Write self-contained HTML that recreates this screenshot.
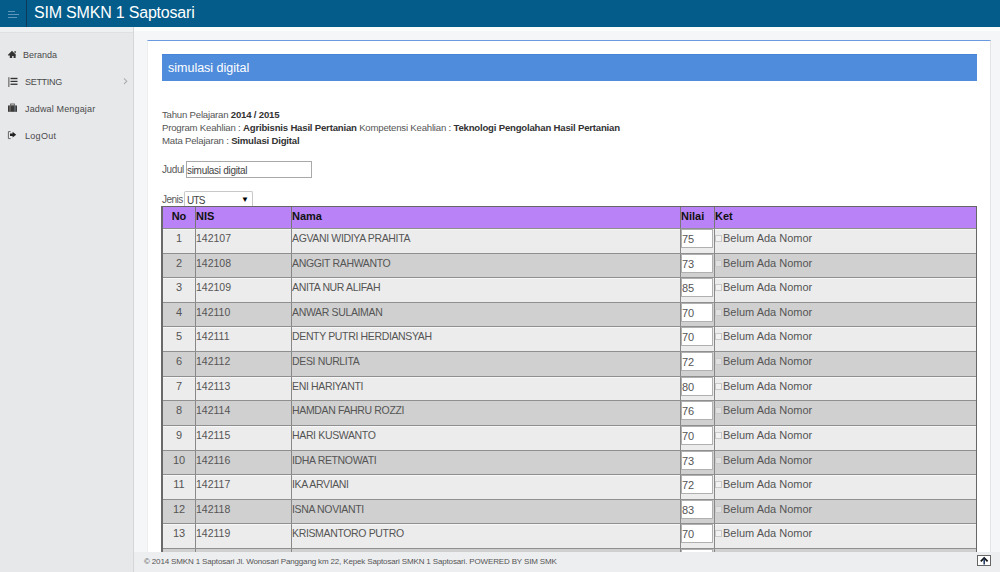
<!DOCTYPE html>
<html><head><meta charset="utf-8">
<style>
*{box-sizing:border-box;margin:0;padding:0}
html,body{width:1000px;height:572px;overflow:hidden;font-family:"Liberation Sans",sans-serif;background:#f5f6f8;position:relative}
#hdr{position:absolute;left:0;top:0;width:1000px;height:27px;background:#035c8a}
#tog{position:absolute;left:0;top:0;width:27px;height:27px;border-right:1px solid #0e3a55}
#tog i{position:absolute;left:8px;height:1px;background:#5f95ba}
#title{position:absolute;left:34px;top:4px;color:#fff;font-size:16px;letter-spacing:-0.2px;white-space:nowrap}
#side{position:absolute;left:0;top:27px;width:134px;height:545px;background:#e7e8ea;border-right:1px solid #d5d6d8}
#side .strip{position:absolute;left:0;top:0;width:133px;height:6px;background:#eff0f2;border-bottom:1px solid #dfe0e2}
.mi{position:absolute;font-size:9px;color:#4a4a4a;white-space:nowrap}
#panel{position:absolute;left:147px;top:40px;width:844px;height:520px;background:#fff;border-top:1px solid #6a9be0;border-right:1px solid #e3e4e6;border-left:1px solid #eceef0}
#bar{position:absolute;left:162px;top:54px;width:815px;height:27px;background:#4f8cdb;border-top:1px solid #4684d8}
#bar span{position:absolute;left:6px;top:6px;color:#fff;font-size:12.5px}
.info{position:absolute;left:162px;font-size:9.6px;color:#555;white-space:nowrap;letter-spacing:-0.2px}
.info b{color:#333}
#judul{position:absolute;left:162px;top:164px;font-size:10px;color:#5a5a5a;letter-spacing:-0.4px}
#inp{position:absolute;left:186px;top:161px;width:126px;height:17px;border:1px solid #a9a9a9;background:#fff;font-size:10px;color:#444;padding:3px 0;letter-spacing:-0.3px}
#jenis{position:absolute;left:162px;top:194px;font-size:10px;color:#5a5a5a;letter-spacing:-0.5px}
#sel{position:absolute;left:184px;top:191px;width:69px;height:16px;border:1px solid #c8c8c8;border-bottom:none;border-radius:2px 2px 0 0;background:#fff;font-size:10px;color:#444;padding:3px 2px;letter-spacing:-0.8px}
#sel b{position:absolute;right:4px;top:3px;font-size:8px;color:#000}
#tbl{position:absolute;left:161px;top:206px;width:816px;height:346px;border:1px solid #666;border-left:2px solid #6a6a6a;border-bottom:none;overflow:hidden}
#th{position:absolute;left:0;top:0;width:813px;height:21px;background:#b982f7;font-size:11px;font-weight:bold;color:#111}
#th div{position:absolute;top:0;height:21px;padding-top:3px;border-left:1px solid #777}
.r{position:absolute;left:0;width:813px;height:25px;border-top:1px solid #8f8f8f;font-size:11px;color:#555}
.r.a{background:#ececec;box-shadow:inset 0 1px 0 #f7f7f7}
.r.b{background:#d0d0d0}
.r div{position:absolute;top:0;height:25px;padding-top:3px;border-left:1px solid #888;white-space:nowrap}
.c0{left:-1px;width:34px;text-align:center;border-left:none!important}
.c1{left:32px;width:96px;padding-left:0;text-indent:0;font-size:10.5px}
.c2{left:128px;width:389px;padding-left:0px;letter-spacing:-0.35px;font-size:10.5px}
.c3{left:517px;width:34px}
.c4{left:551px;width:262px;padding-left:0}
.r .c3{padding-top:0}
.nv{position:absolute;left:0;top:0;width:32px;height:19px;border:1px solid #b0b0b0;background:#fff;padding:3px 0 0 0;color:#555}
.cb{display:inline-block;width:7px;height:7px;border:1px solid #c9c9c9;background:rgba(255,255,255,0.35);margin:0 1px 0 0;vertical-align:0px}
#foot{position:absolute;left:134px;top:552px;width:866px;height:20px;background:#edeef0;font-size:8px;color:#555}
#foot span{position:absolute;left:10px;top:5px;white-space:nowrap;letter-spacing:-0.15px}
#top{position:absolute;left:977px;top:555px;width:14px;height:11px;border:1px solid #666;background:#fff}
</style></head><body>
<div id="hdr">
  <div id="tog"><i style="top:10.5px;width:6.5px"></i><i style="top:13.5px;width:11px"></i><i style="top:16.5px;width:8.5px"></i></div>
  <div id="title">SIM SMKN 1 Saptosari</div>
</div>
<div id="side"><div class="strip"></div>
  <svg id="icons" width="134" height="150" style="position:absolute;left:0;top:-27px" viewBox="0 0 134 150">
<g fill="#333">
<path d="M7.8 55 L12 50.8 L16.2 55 L15.6 55.6 L15.6 58 L13.6 58 L13.6 56 L12.2 56 L12.2 58 L9.8 58 L9.8 55.6 L8.4 55.6 Z"/>
<rect x="14.5" y="51" width="1.2" height="2.2"/>
<rect x="10.5" y="77.8" width="7" height="1.4"/>
<rect x="10.5" y="80.8" width="7" height="1.2"/>
<rect x="10.5" y="83.6" width="7" height="1.3"/>
<rect x="8" y="77.2" width="1.6" height="9.8" fill="#888"/>
<rect x="8" y="105.5" width="9" height="6.3" fill="#3a3a3a"/>
<rect x="10.6" y="104" width="3.8" height="1.8" fill="none" stroke="#555" stroke-width="0.9"/>
<rect x="9.6" y="105.5" width="0.8" height="6.3" fill="#9a8f8a"/>
<rect x="14.6" y="105.5" width="0.8" height="6.3" fill="#8a9aa5"/>
<path d="M10.6 131.6 L8.4 131.6 L8.4 138.6 L10.6 138.6" fill="none" stroke="#666" stroke-width="1"/>
<path d="M10 133.6 L12.6 133.6 L12.6 131.8 L16.2 134.8 L12.6 137.6 L12.6 135.9 L10 135.9 Z" fill="#222"/>
</g>
<path d="M124 78.5 L126.8 81.2 L124 84" fill="none" stroke="#b0b0b0" stroke-width="1.1"/>
</svg>
  <div class="mi" style="top:23px;left:23px">Beranda</div>
  <div class="mi" style="top:50px;left:25px;letter-spacing:-0.3px">SETTING</div>
  <div class="mi" style="top:77px;left:25px;letter-spacing:0.15px">Jadwal Mengajar</div>
  <div class="mi" style="top:104px;left:25px;letter-spacing:0.3px">LogOut</div>
</div>
<div style="position:absolute;left:134px;top:27px;width:866px;height:4px;background:#fbfcfc"></div>
<div id="panel"></div>
<div id="bar"><span>simulasi digital</span></div>
<div class="info" style="top:109px">Tahun Pelajaran <b>2014 / 2015</b></div>
<div class="info" style="top:122px">Program Keahlian : <b>Agribisnis Hasil Pertanian</b> Kompetensi Keahlian : <b>Teknologi Pengolahan Hasil Pertanian</b></div>
<div class="info" style="top:135px">Mata Pelajaran : <b>Simulasi Digital</b></div>
<div id="judul">Judul</div>
<div id="inp">simulasi digital</div>
<div id="jenis">Jenis</div>
<div id="sel">UTS<b>&#9660;</b></div>
<div id="tbl">
<div id="th"><div style="left:-1px;width:34px;text-align:center;border-left:none">No</div><div style="left:32px;width:96px;padding-left:0">NIS</div><div style="left:128px;width:389px;padding-left:0">Nama</div><div style="left:517px;width:34px;padding-left:0">Nilai</div><div style="left:551px;width:262px;padding-left:0">Ket</div></div>
<div class="r a" style="top:21.00px"><div class="c0">1</div><div class="c1">142107</div><div class="c2">AGVANI WIDIYA PRAHITA</div><div class="c3"><span class="nv">75</span></div><div class="c4"><span class="cb"></span>Belum Ada Nomor</div></div>
<div class="r b" style="top:45.61px"><div class="c0">2</div><div class="c1">142108</div><div class="c2">ANGGIT RAHWANTO</div><div class="c3"><span class="nv">73</span></div><div class="c4"><span class="cb"></span>Belum Ada Nomor</div></div>
<div class="r a" style="top:70.23px"><div class="c0">3</div><div class="c1">142109</div><div class="c2">ANITA NUR ALIFAH</div><div class="c3"><span class="nv">85</span></div><div class="c4"><span class="cb"></span>Belum Ada Nomor</div></div>
<div class="r b" style="top:94.84px"><div class="c0">4</div><div class="c1">142110</div><div class="c2">ANWAR SULAIMAN</div><div class="c3"><span class="nv">70</span></div><div class="c4"><span class="cb"></span>Belum Ada Nomor</div></div>
<div class="r a" style="top:119.46px"><div class="c0">5</div><div class="c1">142111</div><div class="c2">DENTY PUTRI HERDIANSYAH</div><div class="c3"><span class="nv">70</span></div><div class="c4"><span class="cb"></span>Belum Ada Nomor</div></div>
<div class="r b" style="top:144.07px"><div class="c0">6</div><div class="c1">142112</div><div class="c2">DESI NURLITA</div><div class="c3"><span class="nv">72</span></div><div class="c4"><span class="cb"></span>Belum Ada Nomor</div></div>
<div class="r a" style="top:168.69px"><div class="c0">7</div><div class="c1">142113</div><div class="c2">ENI HARIYANTI</div><div class="c3"><span class="nv">80</span></div><div class="c4"><span class="cb"></span>Belum Ada Nomor</div></div>
<div class="r b" style="top:193.30px"><div class="c0">8</div><div class="c1">142114</div><div class="c2">HAMDAN FAHRU ROZZI</div><div class="c3"><span class="nv">76</span></div><div class="c4"><span class="cb"></span>Belum Ada Nomor</div></div>
<div class="r a" style="top:217.92px"><div class="c0">9</div><div class="c1">142115</div><div class="c2">HARI KUSWANTO</div><div class="c3"><span class="nv">70</span></div><div class="c4"><span class="cb"></span>Belum Ada Nomor</div></div>
<div class="r b" style="top:242.53px"><div class="c0">10</div><div class="c1">142116</div><div class="c2">IDHA RETNOWATI</div><div class="c3"><span class="nv">73</span></div><div class="c4"><span class="cb"></span>Belum Ada Nomor</div></div>
<div class="r a" style="top:267.15px"><div class="c0">11</div><div class="c1">142117</div><div class="c2">IKA ARVIANI</div><div class="c3"><span class="nv">72</span></div><div class="c4"><span class="cb"></span>Belum Ada Nomor</div></div>
<div class="r b" style="top:291.76px"><div class="c0">12</div><div class="c1">142118</div><div class="c2">ISNA NOVIANTI</div><div class="c3"><span class="nv">83</span></div><div class="c4"><span class="cb"></span>Belum Ada Nomor</div></div>
<div class="r a" style="top:316.38px"><div class="c0">13</div><div class="c1">142119</div><div class="c2">KRISMANTORO PUTRO</div><div class="c3"><span class="nv">70</span></div><div class="c4"><span class="cb"></span>Belum Ada Nomor</div></div>
<div class="r b" style="top:341.00px"><div class="c0">14</div><div class="c1">142120</div><div class="c2"></div><div class="c3"><span class="nv">0</span></div><div class="c4"><span class="cb"></span>Belum Ada Nomor</div></div>
</div>
<div id="foot"><span>© 2014 SMKN 1 Saptosari Jl. Wonosari Panggang km 22, Kepek Saptosari SMKN 1 Saptosari. POWERED BY SIM SMK</span></div>
<div id="top"><svg width="12" height="9" viewBox="0 0 12 9" style="position:absolute;left:0;top:0"><path d="M2.8 5.4 L6.2 2 L9.6 5.4" fill="none" stroke="#111" stroke-width="1.7"/><path d="M6.2 2.6 L6.2 8.4" stroke="#24406a" stroke-width="1.6"/></svg></div>
</body></html>
